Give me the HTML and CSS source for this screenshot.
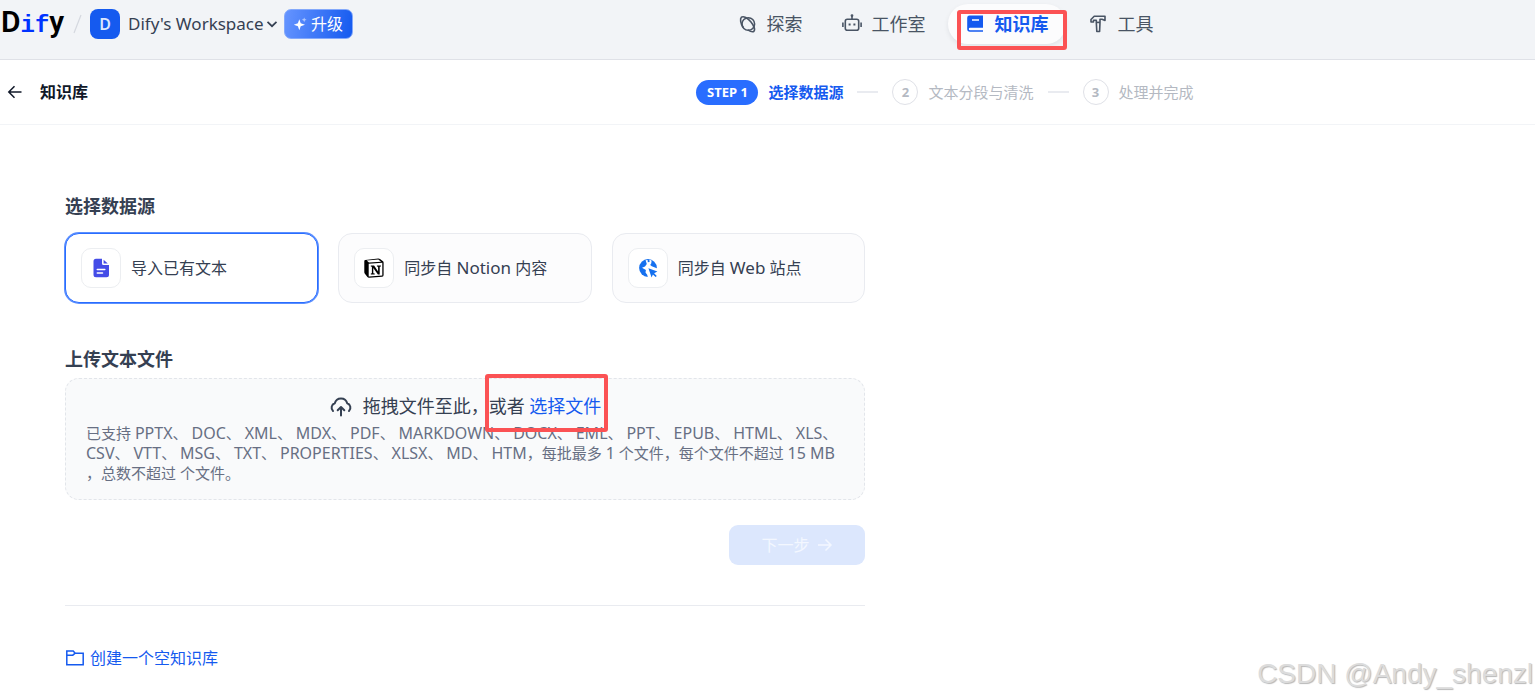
FILE: index.html
```html
<!DOCTYPE html>
<html lang="zh-CN">
<head>
<meta charset="utf-8">
<meta name="viewport" content="width=device-width, initial-scale=1">
<title>知识库 - Dify</title>
<link rel="stylesheet" href="styles.css">
</head>
<body>
<header class="topbar">
  <div class="brand">
    <a class="logo" href="#">D<span class="logo-accent">if</span>y</a>
    <svg class="slash" width="9" height="20" viewBox="0 0 9 20" fill="none" stroke="#d5d8df" stroke-width="1.2"><path d="M8 1 1 19"/></svg>
    <span class="avatar">D</span>
    <button class="workspace" type="button">Dify's Workspace
      <svg width="12" height="12" viewBox="0 0 12 12" fill="none" stroke="#354052" stroke-width="1.7"><path d="m1.5 3.8 4.5 4.4 4.500-4.400"/></svg>
    </button>
    <button class="upgrade" type="button">
      <svg width="14" height="14" viewBox="0 0 14 14" fill="#fff"><path d="M6.300 2.200 7.700 6.300 12 7.700 7.700 9.200 6.300 13.300 4.900 9.200.8 7.700 4.900 6.300Z"/><path opacity=".55" d="m11.200.4.7 1.700 1.700.7-1.700.7-.7 1.700-.7-1.700-1.700-.7 1.700-.7Z"/></svg>
      升级
    </button>
  </div>
  <nav class="nav">
    <a class="nav-item" href="#">
      <svg width="20" height="20" viewBox="0 0 20 20" fill="none" stroke="#495464" stroke-width="1.600"><circle cx="11.300" cy="10" r="6.300"/><path d="M6.200 13.400C3.400 9.600 2.800 4.700 4.500 3.200c1.800-1.500 6.200.6 9.500 4.700s4.500 8.500 2.700 9.600c-1.200.7-3.600-.1-5.900-1.700"/></svg>
      探索</a>
    <a class="nav-item" href="#">
      <svg width="20" height="20" viewBox="0 0 20 20" fill="none" stroke="#495464" stroke-width="1.600"><rect x="3.300" y="5.300" width="13.400" height="11" rx="2"/><path d="M10 1.500v4M.9 8.500v4.500M19.100 8.500v4.500"/><circle cx="10" cy="1.600" r=".6"/><path d="M6.600 10.500h2M11.400 10.500h2" stroke-width="2"/></svg>
      工作室</a>
    <a class="nav-item nav-item-active" href="#">
      <svg width="20" height="20" viewBox="0 0 20 20"><path fill="#155aef" d="M4.500 1.500H18v12.300H5a1.200 1.200 0 0 0 0 2.400h13v1.600H5a2.800 2.800 0 0 1-2.800-2.800V3.800a2.300 2.300 0 0 1 2.300-2.300Z"/><path stroke="#fff" stroke-width="1.500" d="M7 6h7"/></svg>
      知识库
      <span class="marker marker-nav"></span></a>
    <a class="nav-item" href="#">
      <svg width="20" height="20" viewBox="0 0 20 20" fill="none" stroke="#495464" stroke-width="1.600" stroke-linejoin="round"><path d="M3 5.500 6.200 2.200H17v4.200l-3-1.200h-2v3.200l-.4 9.100H8.800L8.300 8.400V6.300H5.500V8H3Z"/><path d="M8.300 8.400H12"/></svg>
      工具</a>
  </nav>
</header>

<div class="subbar">
  <a class="back" href="#">
    <svg width="16" height="16" viewBox="0 0 16 16" fill="none" stroke="#101828" stroke-width="1.500"><path d="M14.500 8H2M7.500 2.200 1.800 8l5.700 5.800"/></svg>
    知识库</a>
  <ol class="steps">
    <li class="step step-active"><span class="step-pill">STEP 1</span>选择数据源</li>
    <li class="step"><span class="step-number">2</span>文本分段与清洗</li>
    <li class="step"><span class="step-number">3</span>处理并完成</li>
  </ol>
</div>

<main class="content">
  <h2 class="title">选择数据源</h2>
  <div class="sources">
    <button class="source source-selected" type="button">
      <span class="source-icon"><svg width="20" height="20" viewBox="0 0 20 20"><path fill="#444ce7" d="M5 .8h6v4.700A1.500 1.500 0 0 0 12.500 7H18v9.800a2.500 2.500 0 0 1-2.500 2.500H5a2.500 2.500 0 0 1-2.500-2.500V3.300A2.500 2.500 0 0 1 5 .8ZM12.600 1.800l4.200 3.800h-4.200Z"/><path stroke="#fff" stroke-width="1.500" stroke-linecap="round" d="M6.300 11.500h7.500M6.300 15h5.200"/></svg></span>
      导入已有文本</button>
    <button class="source" type="button">
      <span class="source-icon"><svg width="20" height="20" viewBox="0 0 20 20"><path fill="#000" d="M1.300 2.100 14.300.5q1 0 1.700.5l3 2.300q.6.500.6 1.400v12.400q0 1.600-1.500 1.700L5 19.700q-1 0-1.600-.8L.9 15.700Q.3 15 .3 14V3.200q0-1 1-1.100Z"/><path fill="#fff" d="m2.700 2.600 11.600-1 2.800 2.100L5 4.500ZM4.700 5.700l13.600-.9v12.700l-13.600.9Z"/><path fill="#000" d="M6.800 7.400h3.300l4 6V8.700l-1.200-.3v-1h4v1l-1.200.3v7.800h-1.800L9.300 10v5.300l1.400.3v1H6.800v-1l1.100-.3V8.700l-1.100-.3Z"/></svg></span>
      <span>同步自 <span class="latin">Notion</span> 内容</span></button>
    <button class="source" type="button">
      <span class="source-icon"><svg width="20" height="20" viewBox="0 0 20 20"><circle cx="10" cy="10" r="8.900" fill="#1570ef"/><path fill="#fff" d="M7.600 2.200 9.600 2l.2 2.300 1.800-.3-.2-2.200 2.200.6-.3 2.800-1.100 1.800 1.600 1.300 6.200 2.500v9.200h-10l-.8-3.200-1.700-2.300.4-2.500L4 9.800 7 8.500 8.800 6Z"/><path fill="#1570ef" d="m10.400 10.300 9 3.300-3.300 1.600 2.700 2.700-1.200 1.200-2.700-2.700-1.300 3Z"/></svg></span>
      <span>同步自 <span class="latin">Web</span> 站点</span></button>
  </div>

  <h2 class="title title-upload">上传文本文件</h2>
  <section class="dropzone">
    <div class="drop-line">
      <svg width="24" height="24" viewBox="0 0 24 24" fill="none" stroke="#354052" stroke-width="2" stroke-linecap="round" stroke-linejoin="round"><path d="M4 17A4.600 4.600 0 0 1 5.800 9.300a6.400 6.400 0 0 1 12.400 0A4.600 4.600 0 0 1 20 17M12 21.500v-8M8.700 16.300 12 13l3.300 3.300"/></svg>
      <span>拖拽文件至此，<span class="choose">或者 <label class="browse" for="file">选择文件</label><span class="marker marker-upload"></span></span></span>
      <input class="file-input" id="file" type="file">
    </div>
    <p class="hint">已支持 <span class="ext">PPTX</span>、 <span class="ext">DOC</span>、 <span class="ext">XML</span>、 <span class="ext">MDX</span>、 <span class="ext">PDF</span>、 <span class="ext">MARKDOWN</span>、 <span class="ext">DOCX</span>、 <span class="ext">EML</span>、 <span class="ext">PPT</span>、 <span class="ext">EPUB</span>、 <span class="ext">HTML</span>、 <span class="ext">XLS</span>、<br><span class="ext">CSV</span>、 <span class="ext">VTT</span>、 <span class="ext">MSG</span>、 <span class="ext">TXT</span>、 <span class="ext">PROPERTIES</span>、 <span class="ext">XLSX</span>、 <span class="ext">MD</span>、 <span class="ext">HTM</span>，每批最多 <span class="ext">1</span> 个文件，每个文件不超过 <span class="ext">15 MB</span><br>，总数不超过 个文件。</p>
  </section>

  <div class="actions">
    <button class="next" type="button" disabled>下一步
      <svg width="16" height="16" viewBox="0 0 16 16" fill="none" stroke="currentColor" stroke-width="1.500"><path d="M1 8h13M8.500 2.500 14 8l-5.500 5.500"/></svg>
    </button>
  </div>

  <a class="create" href="#">
    <svg width="20" height="20" viewBox="0 0 20 20" fill="none" stroke="#155aef" stroke-width="1.500"><path d="M1.800 16.800V3h6.400l2 2.200h8v11.600ZM1.800 7.200h6l2.400-2"/></svg>
    创建一个空知识库</a>
</main>
<div class="watermark">CSDN @Andy_shenzl</div>
</body>
</html>
```
FILE: styles.css
```css
* { box-sizing: border-box; }
body {
  margin: 0;
  min-height: 100vh;
  position: relative;
  background: #fff;
  color: #354052;
  font: 16px/24px "Noto Sans", "Noto Sans CJK SC", sans-serif;
}
a { color: inherit; text-decoration: none; }
button { font: inherit; color: inherit; border: 0; background: none; padding: 0; text-align: left; }
svg { flex: none; }

.topbar, .subbar {
  display: grid;
  grid-template-columns: 355px 1fr;
}
.topbar {
  height: 60px;
  padding-bottom: 12px;
  background: #f2f4f7;
  border-bottom: 1px solid #dfe1e7;
}
.brand { display: flex; align-items: center; padding-right: 2px; white-space: nowrap; }
.logo {
  width: 66px;
  padding-left: 1px;
  color: #000;
  font-family: Roboto, sans-serif;
  font-size: 30px;
  font-weight: 600;
  line-height: 32px;
}
.logo-accent { color: #0033ff; font-family: "Liberation Mono", monospace; font-size: 24px; }
.slash { margin: 0 8px 0 7px; }
.avatar {
  width: 30px;
  height: 30px;
  border-radius: 8px;
  background: #155aef;
  color: #dbe6fd;
  font-weight: 600;
  line-height: 30px;
  text-align: center;
}
.workspace { display: flex; align-items: center; gap: 2px; margin-left: 8px; font-size: 17px; }
.upgrade {
  display: flex;
  align-items: center;
  gap: 4px;
  height: 30px;
  margin-left: auto;
  padding: 0 9px 0 8px;
  border: 1px solid #84a9fb;
  border-radius: 7px;
  background: linear-gradient(100deg, #6594ff, #155aef);
  color: #fff;
}

.nav { display: flex; justify-content: center; align-items: center; gap: 5px; white-space: nowrap; }
.nav-item {
  position: relative;
  display: flex;
  align-items: center;
  gap: 10px;
  height: 40px;
  padding: 0 17px;
  border-radius: 20px;
  color: #495464;
  font-size: 18px;
}
.nav-item-active {
  background: #fcfcfd;
  color: #155aef;
  font-weight: 700;
  box-shadow: 0 2px 5px rgba(16, 24, 40, .08);
}
.marker { position: absolute; border: 4px solid #fb5254; border-radius: 3px; }
.marker-nav { inset: 6px -1px -6px 9px; }
.marker-upload { inset: -20px -7px -14px -4px; }

.subbar { height: 65px; border-bottom: 1px solid #f2f4f7; }
.back {
  display: flex;
  align-items: center;
  gap: 17px;
  padding-left: 7px;
  color: #101828;
  font-weight: 600;
}
.steps {
  display: flex;
  justify-content: center;
  align-items: center;
  margin: 0;
  padding: 0;
  list-style: none;
  white-space: nowrap;
  color: #b4b9c2;
  font-size: 15px;
}
.step { display: flex; align-items: center; gap: 10px; }
.step + .step::before {
  content: "";
  width: 21px;
  height: 2px;
  margin: 0 4px 0 14px;
  background: #e9ebf0;
}
.step-active { color: #155aef; font-weight: 700; }
.step-pill, .step-number { border-radius: 13px; font-size: 13px; font-weight: 700; text-align: center; }
.step-pill { width: 62px; height: 25px; background: #296dff; color: #fff; line-height: 25px; }
.step-number { width: 26px; height: 26px; border: 1px solid #dfe1e7; line-height: 24px; }

.content { max-width: 865px; padding: 69px 0 0 65px; }
.title { margin: 0; font-size: 18px; font-weight: 600; line-height: 24px; }
.title-upload { margin-top: 44px; }
.sources { display: grid; grid-template-columns: repeat(3, 1fr); gap: 20px; margin-top: 15px; }
.source {
  display: flex;
  align-items: center;
  gap: 10px;
  height: 70px;
  padding: 0 15px;
  border: 1px solid #e9ebf0;
  border-radius: 14px;
  background: #fcfcfd;
}
.source-selected { border-color: #296dff; background: #fff; box-shadow: 0 0 0 1px #5b8fff; }
.source-icon {
  display: grid;
  place-items: center;
  width: 40px;
  height: 40px;
  border: 1px solid #eceef1;
  border-radius: 10px;
  background: #fff;
}
.latin { font-size: 17px; }

.dropzone {
  margin-top: 7px;
  padding: 14px 20px 16px;
  border: 1px dashed #e2e5ea;
  border-radius: 14px;
  background: #f9fafb;
}
.drop-line { display: flex; justify-content: center; align-items: center; gap: 10px; height: 26px; font-size: 18px; }
.choose { position: relative; display: inline-block; }
.browse { color: #155aef; }
.file-input { display: none; }
.hint { margin: 4px 0 0; color: #676f83; font-size: 15px; line-height: 20px; white-space: nowrap; }
.ext { font-size: 16px; line-height: 16px; }

.actions { display: flex; justify-content: flex-end; padding: 25px 0 40px; border-bottom: 1px solid #e9ebf0; }
.next {
  display: flex;
  justify-content: center;
  align-items: center;
  gap: 7px;
  width: 136px;
  height: 40px;
  border-radius: 9px;
  background: #dce7fd;
  color: #f3f7ff;
}
.create { display: inline-flex; align-items: center; gap: 5px; margin-top: 40px; color: #155aef; }
.watermark {
  position: absolute;
  right: 2px;
  bottom: 10px;
  color: #dcdcdc;
  font: 28px/32px "Liberation Sans", sans-serif;
  text-shadow: 1px 1px 1px #b8b8b8;
}
```
